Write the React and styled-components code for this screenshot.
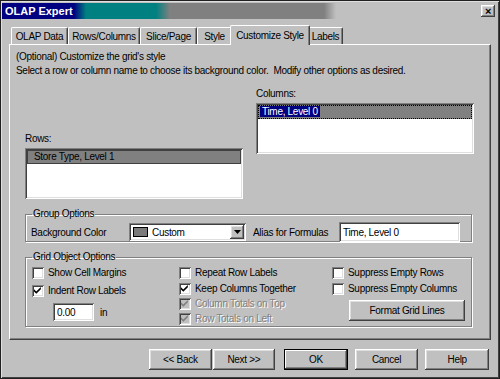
import React from 'react';
import styled, { createGlobalStyle, css } from 'styled-components';

const GlobalStyle = createGlobalStyle`
    * { box-sizing: border-box; }
    body {
        margin: 0;
        background: #c0c0c0;
        font-family: "Liberation Sans", Arial, sans-serif;
        font-size: 10px;
        letter-spacing: -0.3px;
        color: #000;
    }
`;

const raised = css`
    box-shadow: inset -1px -1px #404040, inset 1px 1px #fff, inset -2px -2px #808080, inset 2px 2px #dfdfdf;
`;

const sunken = css`
    box-shadow: inset 1px 1px #808080, inset -1px -1px #fff, inset 2px 2px #404040, inset -2px -2px #dfdfdf;
`;

const Window = styled.div`
    width: 500px;
    height: 379px;
    background: #c0c0c0;
    border: 1px solid #202020;
    box-shadow: inset 1px 1px #dfdfdf, inset -1px -1px #404040;
    padding: 1px 2px 0 1px;
    display: flex;
    flex-direction: column;
`;

const TitleBar = styled.div`
    height: 16px;
    margin-top: 1px;
    display: flex;
    align-items: center;
    justify-content: space-between;
    padding: 0 2px 0 3px;
    background: linear-gradient(to right, #000080 0, #000080 72px, #008080 84px, #008080 154px, #808080 168px, #808080 322px, #c0c0c0 334px);
`;

const Title = styled.span`
    color: #fff;
    font-weight: bold;
    font-size: 11px;
    letter-spacing: 0;
`;

const CloseButton = styled.div`
    width: 14px;
    height: 12px;
    ${raised};
    background: #c0c0c0;
    display: flex;
    align-items: center;
    justify-content: center;
    font-weight: bold;
    font-size: 11px;
    line-height: 1;
`;

const Body = styled.div`
    padding: 6px 8px 0 7px;
    display: flex;
    flex-direction: column;
`;

const TabRow = styled.div`
    display: flex;
    align-items: flex-end;
    height: 19px;
    padding-left: 2px;
    position: relative;
    z-index: 1;
`;

const Tab = styled.div`
    width: ${p => p.w}px;
    height: ${p => (p.active ? 20 : 17)}px;
    margin: 0 ${p => (p.active ? -2 : 0)}px ${p => (p.active ? -1 : 0)}px;
    background: #c0c0c0;
    border-top: 1px solid #fff;
    border-left: 1px solid #fff;
    border-right: 1px solid #404040;
    box-shadow: inset -1px 0 #808080;
    border-radius: 2px 2px 0 0;
    display: flex;
    align-items: center;
    justify-content: center;
    white-space: nowrap;
    position: relative;
    z-index: ${p => (p.active ? 2 : 1)};
`;

const Panel = styled.div`
    width: 482px;
    height: 296px;
    border-top: 1px solid #fff;
    border-left: 1px solid #fff;
    border-right: 1px solid #404040;
    border-bottom: 1px solid #404040;
    box-shadow: inset -1px -1px #808080;
    padding: 5px 0 0 6px;
`;

const Intro = styled.div`
    line-height: 14px;
`;

const Lists = styled.div`
    display: flex;
    gap: 13px;
    margin: 10px 0 0 9px;
`;

const ListBlock = styled.div`
    width: 218px;
    margin-top: ${p => p.offset || 0}px;
`;

const Label = styled.div`
    height: 15px;
`;

const ListBox = styled.div`
    height: 51px;
    background: #fff;
    ${sunken};
    padding: 2px;
`;

const ListItem = styled.div`
    height: 14px;
    line-height: 12px;
    background: #808080;
    border: 1px ${p => (p.focus ? 'dotted #000' : 'solid #404040')};
    padding-left: ${p => (p.focus ? 1 : 6)}px;
`;

const Highlight = styled.span`
    background: #000080;
    color: #fff;
    padding: 0 2px;
`;

const Group = styled.fieldset`
    margin: ${p => p.top}px 0 0 9px;
    width: 447px;
    height: ${p => p.h}px;
    border: 1px solid #808080;
    box-shadow: inset 1px 1px #fff, 1px 1px #fff;
    padding: 0 0 0 5px;
`;

const Legend = styled.legend`
    padding: 0 1px;
    margin-left: 1px;
    line-height: 12px;
`;

const GroupRow = styled.div`
    display: flex;
    align-items: center;
    margin-top: 2px;
`;

const FieldLabel = styled.span`
    width: ${p => p.w}px;
    flex: none;
`;

const Combo = styled.div`
    width: 117px;
    height: 18px;
    background: #fff;
    ${sunken};
    display: flex;
    align-items: center;
    padding: 2px 2px 2px 4px;
    margin-right: 7px;
`;

const Swatch = styled.div`
    width: 15px;
    height: 10px;
    background: #7a7a7a;
    border: 1px solid #000;
    margin-right: 4px;
`;

const ComboText = styled.span`
    flex: 1;
`;

const DropButton = styled.div`
    width: 14px;
    height: 14px;
    background: #c0c0c0;
    ${raised};
    display: flex;
    align-items: center;
    justify-content: center;
`;

const TextInput = styled.div`
    width: ${p => p.w}px;
    height: ${p => p.h}px;
    background: #fff;
    ${sunken};
    display: flex;
    align-items: center;
    padding-left: 4px;
`;

const OptionGrid = styled.div`
    display: grid;
    grid-template-columns: 147px 153px 1fr;
    margin-top: 2px;
    padding-left: 1px;
`;

const OptionCol = styled.div`
    display: flex;
    flex-direction: column;
`;

const Check = styled.label`
    display: flex;
    align-items: center;
    height: 15px;
    margin-top: ${p => p.gap || 0}px;
    color: ${p => (p.disabled ? '#808080' : '#000')};
    text-shadow: ${p => (p.disabled ? '1px 1px #fff' : 'none')};
`;

const Box = styled.span`
    width: 12px;
    height: 12px;
    flex: none;
    background: ${p => (p.disabled ? '#c0c0c0' : '#fff')};
    ${sunken};
    margin-right: 4px;
    display: flex;
    align-items: center;
    justify-content: center;
`;

const IndentRow = styled.div`
    display: flex;
    align-items: center;
    gap: 6px;
    margin: 5px 0 0 21px;
`;

const Button = styled.div`
    width: ${p => p.w || 64}px;
    height: 21px;
    background: #c0c0c0;
    ${raised};
    ${p => p.primary && css`
        border: 1px solid #000;
        box-shadow: inset -1px -1px #404040, inset 1px 1px #fff, inset -2px -2px #808080;
    `}
    display: flex;
    align-items: center;
    justify-content: center;
    margin-left: ${p => p.left || 0}px;
`;

const GridButton = styled(Button)`
    margin-top: 4px;
`;

const ButtonRow = styled.div`
    display: flex;
    margin: 9px 0 0 140px;
`;

const CheckMark = ({ color = '#000' }) => (
    <svg width="8" height="8" viewBox="0 0 7 7">
        <path d="M0 2 L2 4 L6 0 L6 2 L2 6 L0 4 Z" fill={color} />
    </svg>
);

const CheckBox = ({ label, checked, disabled, gap }) => (
    <Check disabled={disabled} gap={gap}>
        <Box disabled={disabled}>{checked && <CheckMark color={disabled ? '#808080' : '#000'} />}</Box>
        {label}
    </Check>
);

const tabs = [
    ['OLAP Data', 57],
    ['Rows/Columns', 72],
    ['Slice/Page', 57],
    ['Style', 35],
    ['Customize Style', 80],
    ['Labels', 35],
];

const App = () => (
    <>
        <GlobalStyle />
        <Window>
            <TitleBar>
                <Title>OLAP Expert</Title>
                <CloseButton>×</CloseButton>
            </TitleBar>
            <Body>
                <TabRow>
                    {tabs.map(([t, w]) => (
                        <Tab key={t} w={w} active={t === 'Customize Style'}>
                            {t}
                        </Tab>
                    ))}
                </TabRow>
                <Panel>
                    <Intro>
                        (Optional) Customize the grid's style
                        <br />
                        Select a row or column name to choose its background color.&nbsp; Modify other options as desired.
                    </Intro>
                    <Lists>
                        <ListBlock offset={45}>
                            <Label>Rows:</Label>
                            <ListBox>
                                <ListItem>Store Type, Level 1</ListItem>
                            </ListBox>
                        </ListBlock>
                        <ListBlock>
                            <Label>Columns:</Label>
                            <ListBox>
                                <ListItem focus>
                                    <Highlight>Time, Level 0</Highlight>
                                </ListItem>
                            </ListBox>
                        </ListBlock>
                    </Lists>
                    <Group top={9} h={34}>
                        <Legend>Group Options</Legend>
                        <GroupRow>
                            <FieldLabel w={98}>Background Color</FieldLabel>
                            <Combo>
                                <Swatch />
                                <ComboText>Custom</ComboText>
                                <DropButton>
                                    <svg width="7" height="4" viewBox="0 0 7 4">
                                        <path d="M0 0 H7 L3.5 4 Z" fill="#000" />
                                    </svg>
                                </DropButton>
                            </Combo>
                            <FieldLabel w={86}>Alias for Formulas</FieldLabel>
                            <TextInput w={121} h={20}>
                                Time, Level 0
                            </TextInput>
                        </GroupRow>
                    </Group>
                    <Group top={9} h={76}>
                        <Legend>Grid Object Options</Legend>
                        <OptionGrid>
                            <OptionCol>
                                <CheckBox label="Show Cell Margins" />
                                <CheckBox label="Indent Row Labels" checked gap={3} />
                                <IndentRow>
                                    <TextInput w={41} h={18}>
                                        0.00
                                    </TextInput>
                                    in
                                </IndentRow>
                            </OptionCol>
                            <OptionCol>
                                <CheckBox label="Repeat Row Labels" />
                                <CheckBox label="Keep Columns Together" checked gap={1} />
                                <CheckBox label="Column Totals on Top" checked disabled />
                                <CheckBox label="Row Totals on Left" checked disabled />
                            </OptionCol>
                            <OptionCol>
                                <CheckBox label="Suppress Empty Rows" />
                                <CheckBox label="Suppress Empty Columns" gap={1} />
                                <GridButton w={116} left={17}>
                                    Format Grid Lines
                                </GridButton>
                            </OptionCol>
                        </OptionGrid>
                    </Group>
                </Panel>
                <ButtonRow>
                    <Button w={63}>&lt;&lt; Back</Button>
                    <Button w={63} left={1}>Next &gt;&gt;</Button>
                    <Button w={64} left={9} primary>OK</Button>
                    <Button w={64} left={7}>Cancel</Button>
                    <Button w={64} left={7}>Help</Button>
                </ButtonRow>
            </Body>
        </Window>
    </>
);

export default App;
